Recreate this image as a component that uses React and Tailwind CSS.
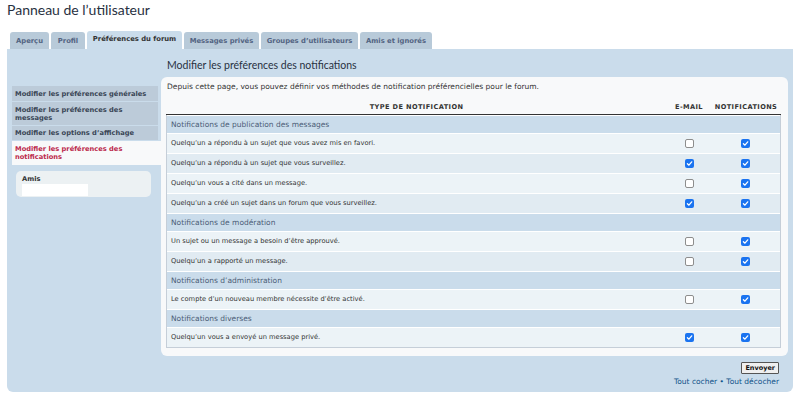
import React from 'react';

const tabs = [
  { label: 'Aperçu', w: 'w-[39px]' },
  { label: 'Profil', w: 'w-[34px]' },
  { label: 'Préférences du forum', w: 'w-[95px]', active: true },
  { label: 'Messages privés', w: 'w-[75px]' },
  { label: "Groupes d’utilisateurs", w: 'w-[97px]' },
  { label: 'Amis et ignorés', w: 'w-[72px]' },
];

const navItems = [
  { label: 'Modifier les préférences générales', h: 'h-[15px]' },
  { label: 'Modifier les préférences des messages', h: 'h-[23px]' },
  { label: 'Modifier les options d’affichage', h: 'h-[14px]' },
  { label: 'Modifier les préférences des notifications', h: 'h-[24px]', active: true },
];

const sections = [
  {
    title: 'Notifications de publication des messages',
    rows: [
      { text: 'Quelqu’un a répondu à un sujet que vous avez mis en favori.', email: false, notif: true },
      { text: 'Quelqu’un a répondu à un sujet que vous surveillez.', email: true, notif: true },
      { text: 'Quelqu’un vous a cité dans un message.', email: false, notif: true },
      { text: 'Quelqu’un a créé un sujet dans un forum que vous surveillez.', email: true, notif: true },
    ],
  },
  {
    title: 'Notifications de modération',
    rows: [
      { text: 'Un sujet ou un message a besoin d’être approuvé.', email: false, notif: true },
      { text: 'Quelqu’un a rapporté un message.', email: false, notif: true },
    ],
  },
  {
    title: 'Notifications d’administration',
    rows: [
      { text: 'Le compte d’un nouveau membre nécessite d’être activé.', email: false, notif: true },
    ],
  },
  {
    title: 'Notifications diverses',
    rows: [
      { text: 'Quelqu’un vous a envoyé un message privé.', email: true, notif: true },
    ],
  },
];

const Check = ({ on }) =>
  on ? (
    <span className="w-[9px] h-[9px] rounded-[2px] bg-[#1a73f0] flex items-center justify-center">
      <svg width="7" height="7" viewBox="0 0 10 10">
        <path d="M2 5.3 L4.2 7.4 L8.2 2.6" fill="none" stroke="#fff" strokeWidth="1.8" strokeLinecap="round" strokeLinejoin="round" />
      </svg>
    </span>
  ) : (
    <span className="w-[9px] h-[9px] rounded-[2px] bg-white border border-[#8d8d8d]"></span>
  );

const App = () => {
  return (
    <div className="w-[800px] h-[398px] bg-white text-[#333] font-['DejaVu_Sans',sans-serif] overflow-hidden">
      <h1 className="pl-[7px] h-[31px] text-[14px] leading-[20px] text-[#28313f] font-['Lato',sans-serif]">
        Panneau de l’utilisateur
      </h1>

      <div className="flex items-end gap-[2px] pl-[10px] h-[18px]">
        {tabs.map((t) => (
          <div
            key={t.label}
            className={`${t.w} flex items-center justify-center rounded-t-[3px] text-[6.8px] font-bold whitespace-nowrap ${
              t.active ? 'h-[18px] bg-[#cadceb] text-[#333] pb-[2px]' : 'h-[17px] bg-[#b8cad9] text-[#536482] pt-[1px]'
            }`}
          >
            {t.label}
          </div>
        ))}
      </div>

      <div className="mx-[7px] h-[343px] bg-[#cadceb] rounded-b-[6px] flex pl-[5px] pr-[5px]">
        <div className="w-[149px] pt-[37px] flex flex-col">
          <div className="flex flex-col gap-[1px]">
            {navItems.map((n) => (
              <div
                key={n.label}
                className={`${n.h} flex items-center px-[3px] text-[6.7px] leading-[8px] font-bold ${
                  n.active ? 'bg-[#f8f9fa] text-[#bc2a4d]' : 'bg-[#bccbd9] text-[#3a4656] mr-[3px]'
                }`}
              >
                {n.label}
              </div>
            ))}
          </div>
          <div className="mt-[6px] ml-[4px] mr-[10px] h-[26px] rounded-[5px] bg-[#ecf1f3] px-[6px] pt-[4px]">
            <div className="text-[6.7px] leading-[8px] font-bold text-[#333]">Amis</div>
            <div className="w-[66px] h-[12px] bg-white mt-[1px]"></div>
          </div>
        </div>

        <div className="flex-1 flex flex-col">
          <h2 className="h-[28px] pl-[6px] pt-[9px] text-[10.5px] leading-[14px] text-[#28313f] font-['Lato',sans-serif]">
            Modifier les préférences des notifications
          </h2>
          <div className="h-[279px] bg-[#f8f9fa] rounded-[6px] px-[5px] pt-[5px]">
            <p className="pl-[1px] text-[7.5px] leading-[9px]">
              Depuis cette page, vous pouvez définir vos méthodes de notification préférencielles pour le forum.
            </p>
            <div className="mt-[10px] flex h-[14px] items-center border-b border-[#333] text-[6.6px] font-bold tracking-[0.4px] mr-[2px]">
              <div className="flex-1 text-center">TYPE DE NOTIFICATION</div>
              <div className="w-[44px] text-center">E-MAIL</div>
              <div className="w-[70px] text-center">NOTIFICATIONS</div>
            </div>
            <div className="border-x border-b border-[#c5ced8] mr-[2px]">
              {sections.map((s) => (
                <div key={s.title}>
                  <div className="h-[18px] border-t border-white bg-[#cadceb] flex items-center pl-[4px] text-[7.5px] text-[#4c5d77]">
                    {s.title}
                  </div>
                  {s.rows.map((r, i) => (
                    <div
                      key={r.text}
                      className={`h-[20px] border-t border-white flex items-center text-[6.7px] ${
                        i % 2 === 0 ? 'bg-[#ecf3f7]' : 'bg-[#e1ebf2]'
                      }`}
                    >
                      <div className="flex-1 pl-[4px] pb-[1px]">{r.text}</div>
                      <div className="w-[44px] flex justify-center">
                        <Check on={r.email} />
                      </div>
                      <div className="w-[69px] flex justify-center">
                        <Check on={r.notif} />
                      </div>
                    </div>
                  ))}
                </div>
              ))}
            </div>
          </div>
          <div className="flex flex-col items-end pr-[9px] pt-[6px]">
            <button className="h-[12px] px-[3px] text-[6.5px] font-bold leading-[10px] bg-[#efefef] border border-[#555] rounded-[1px] text-[#111]">
              Envoyer
            </button>
            <div className="mt-[3px] text-[7.5px] leading-[9px] text-[#105289]">
              Tout cocher • Tout décocher
            </div>
          </div>
        </div>
      </div>
    </div>
  );
};

export default App;
